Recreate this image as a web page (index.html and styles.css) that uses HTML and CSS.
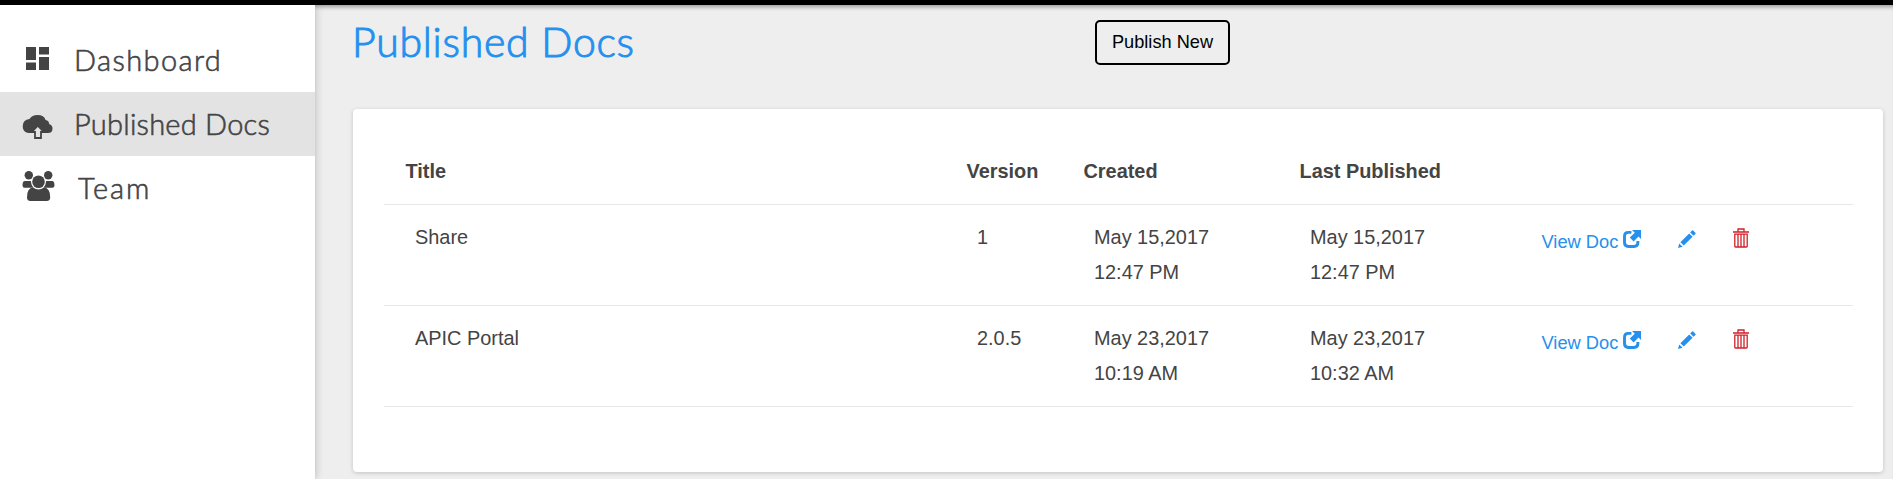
FILE: index.html
```html
<!DOCTYPE html>
<html lang="en">
<head>
<meta charset="utf-8">
<title>Published Docs</title>
<link rel="stylesheet" href="styles.css">
</head>
<body>
<svg class="defs" aria-hidden="true">
  <symbol id="external" viewBox="0 0 18 18"><path d="M8.4 2.4H5.4Q1.5 2.4 1.5 6.4V12.6Q1.5 16.5 5.4 16.5H11Q14.9 16.5 14.9 12.6V11" fill="none" stroke="currentColor" stroke-width="2.9"/><path d="M9 0H18V9L15.5 6.5L10.6 11.4L6.8 7.6L11.8 2.8Z" fill="currentColor"/></symbol>
  <symbol id="pencil" viewBox="0 0 18 18"><path d="M0 18L1.2 13.4L4.6 16.8ZM2.4 12.2L11.2 3.4L14.6 6.8L5.8 15.6ZM12.2 2.4L14 .6Q14.6 0 15.2 .6L17.4 2.8Q18 3.4 17.4 4L15.6 5.8Z" fill="currentColor"/></symbol>
  <symbol id="trash" viewBox="0 0 16 20"><path d="M0 4H16M5 3.5V1H11V3.5M1.8 6.2H14.2V18.2Q14.2 19 13.4 19H2.6Q1.8 19 1.8 18.2ZM5 6.5V19M8 6.5V19M11 6.5V19" fill="none" stroke="currentColor" stroke-width="1.3"/></symbol>
</svg>
<div class="topbar"></div>
<div class="layout">
  <nav class="sidebar">
    <a class="nav-item">
      <svg class="nav-icon" viewBox="0 0 34 34"><path d="M5 4H15V17H5ZM18 4H28V11.5H18ZM5 19.5H15V27H5ZM18 14H28V27H18Z" fill="currentColor"/></svg>
      <span class="nav-label dash">Dashboard</span>
    </a>
    <a class="nav-item active">
      <svg class="nav-icon" viewBox="0 0 34 34"><path d="M8 26Q1.7 25.5 1.7 19.2Q1.7 12.5 8.5 11.9Q11 7.9 16.5 7.9Q23 7.9 24.6 13Q28 13.4 28.2 17Q31.5 18.3 31.5 21.5Q31.5 26 27 26Z" fill="currentColor"/><path d="M16.8 18.6L10.8 25H14V31H20V25H23Z" fill="#e3e3e3" stroke="currentColor" stroke-width="1.8"/></svg>
      <span class="nav-label docs">Published Docs</span>
    </a>
    <a class="nav-item">
      <svg class="nav-icon" viewBox="0 0 34 34"><g fill="currentColor"><circle cx="7.8" cy="4.3" r="4.2"/><circle cx="27.2" cy="4.3" r="4.2"/><path d="M4 10H9.8Q10.2 14.5 12.5 16.8H3.5Q1.5 16.8 1.5 14.3Q1.5 10 4 10ZM31 10H25.2Q24.8 14.5 22.5 16.8H31.3Q33.5 16.8 33.5 14.3Q33.5 10 31 10Z"/><circle cx="17.5" cy="10.7" r="6.3"/><path d="M12 16.5Q17.5 20.5 23 16.5Q29.2 17 29.2 26.2Q29.2 30 25.7 30H9.3Q6 30 6 26.2Q6 17 12 16.5Z"/></g></svg>
      <span class="nav-label team">Team</span>
    </a>
  </nav>
  <main class="content">
    <header class="page-head">
      <h1 class="page-title">Published Docs</h1>
      <button class="publish">Publish New</button>
    </header>
    <section class="card">
      <div class="row head"><span>Title</span><span>Version</span><span>Created</span><span>Last Published</span></div>
      <div class="row">
        <span>Share</span><span>1</span><span>May 15,2017<br>12:47 PM</span><span>May 15,2017<br>12:47 PM</span>
        <div class="actions"><a class="view">View Doc <svg class="external"><use href="#external"/></svg></a><svg class="pencil"><use href="#pencil"/></svg><svg class="trash"><use href="#trash"/></svg></div>
      </div>
      <div class="row">
        <span>APIC Portal</span><span>2.0.5</span><span>May 23,2017<br>10:19 AM</span><span>May 23,2017<br>10:32 AM</span>
        <div class="actions"><a class="view">View Doc <svg class="external"><use href="#external"/></svg></a><svg class="pencil"><use href="#pencil"/></svg><svg class="trash"><use href="#trash"/></svg></div>
      </div>
    </section>
  </main>
</div>
</body>
</html>
```

FILE: styles.css
```css
* { box-sizing: border-box; }
body {
  margin: 0;
  height: 479px;
  overflow: hidden;
  display: flex;
  flex-direction: column;
  background: #eee;
  color: #444;
  font-family: "Liberation Sans", Arial, sans-serif;
}
.defs { position: absolute; width: 0; height: 0; }
.topbar {
  height: 5px;
  flex: none;
  background: #000;
}
.layout { display: flex; flex: 1; }
.sidebar {
  width: 315px;
  padding-top: 23px;
  background: #fff;
  box-shadow: 1px 0 8px rgba(0, 0, 0, .18);
}
.nav-item {
  display: flex;
  align-items: center;
  height: 64px;
  padding-left: 21px;
}
.nav-item.active { background: #e3e3e3; }
.nav-icon { width: 34px; height: 34px; }
.nav-label {
  padding-left: 19px;
  font: 300 29px/64px Lato, sans-serif;
  -webkit-text-stroke: .6px currentColor;
  white-space: nowrap;
}
.dash { letter-spacing: 1.4px; }
.docs { letter-spacing: .25px; }
.team { padding-left: 23px; letter-spacing: 1.9px; }
.content {
  flex: 1;
  padding: 0 10px 7px 38px;
  display: flex;
  flex-direction: column;
  box-shadow: inset 0 5px 4px -3px rgba(0, 0, 0, .35);
}
.page-head {
  display: flex;
  height: 104px;
  padding-top: 15px;
  align-items: flex-start;
}
.page-title {
  width: 743px;
  margin: -1px 0 0 -1px;
  font: 300 41px/46px Lato, sans-serif;
  letter-spacing: .75px;
  -webkit-text-stroke: 1px currentColor;
  color: #2590ee;
}
.publish {
  width: 135px;
  height: 45px;
  padding: 0;
  border: 2px solid #000;
  border-radius: 5px;
  background: transparent;
  font: 18.2px "Liberation Sans", Arial, sans-serif;
  color: #000;
}
.card {
  flex: 1;
  padding: 30px 30px 0 31px;
  background: #fff;
  border-radius: 4px;
  box-shadow: 0 1px 4px rgba(0, 0, 0, .18);
}
.row {
  display: grid;
  grid-template-columns: 561px 117px 216px 232px 1fr;
  height: 101px;
  padding-top: 15px;
  border-bottom: 1px solid #e8e8e8;
  font-size: 19.9px;
  line-height: 35px;
}
.row > span { padding-left: 32px; }
.row > span:first-child { padding-left: 31px; }
.row.head { height: 66px; font-weight: 700; }
.row.head > span { padding-left: 21.5px; }
.actions { display: flex; padding: 4px 0 0 31.5px; color: #2590ee; }
.view { width: 136px; font-size: 18.3px; }
.external { width: 18px; height: 18px; }
.pencil { width: 18px; height: 18px; margin: 6px 37px 0 0; }
.trash { width: 16px; height: 20px; margin-top: 4px; color: #d02028; }
```
